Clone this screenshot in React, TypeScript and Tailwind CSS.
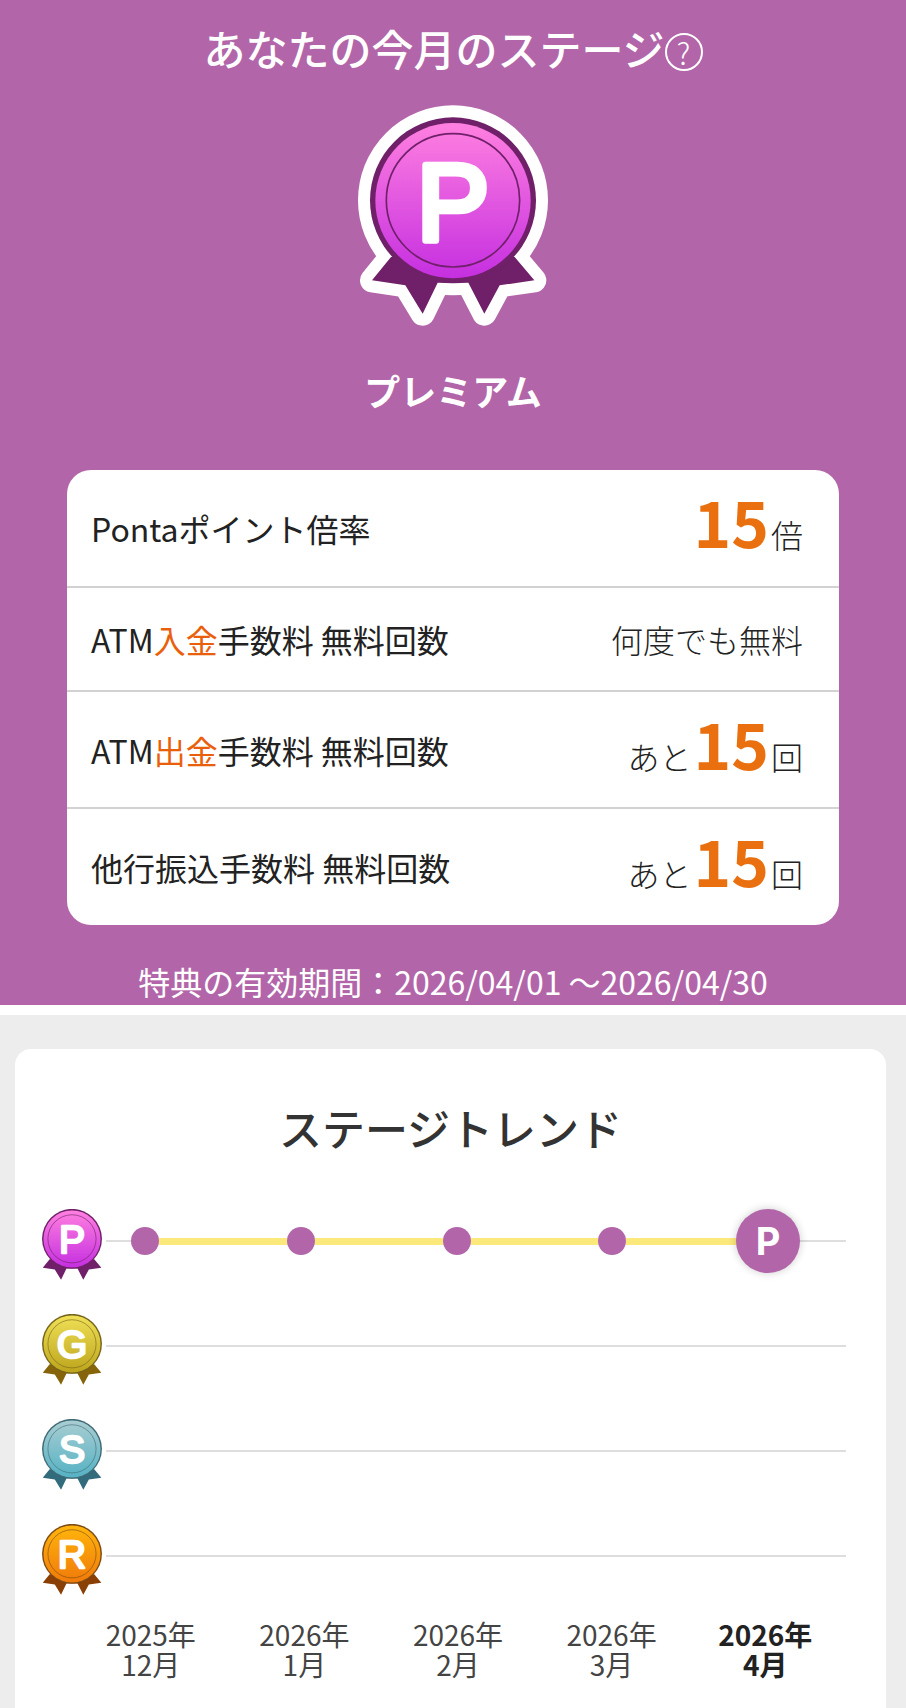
import { clsx } from "clsx";

type StageCode = "P" | "G" | "S" | "R";

const MEDAL_COLORS: Record<StageCode, { top: string; bottom: string; edge: string; ribbon: string }> = {
  P: { top: "#ff80e0", bottom: "#c52fe0", edge: "#6f2068", ribbon: "#6f2068" },
  G: { top: "#efe056", bottom: "#bda51c", edge: "#75631a", ribbon: "#86650a" },
  S: { top: "#a9cdd2", bottom: "#55b2c4", edge: "#3f6a75", ribbon: "#326b7b" },
  R: { top: "#ffb50c", bottom: "#f07a0a", edge: "#7d4a14", ribbon: "#8a3f05" },
};

const RIBBON = "M150 500 93 570 193 585 245 670 290 577 382 577 430 670 476 585 580 570 521 500Z";

const stages: { code: StageCode; name: string }[] = [
  { code: "P", name: "プレミアム" },
  { code: "G", name: "ゴールド" },
  { code: "S", name: "シルバー" },
  { code: "R", name: "レギュラー" },
];

const months = [
  { year: "2025年", month: "12月" },
  { year: "2026年", month: "1月" },
  { year: "2026年", month: "2月" },
  { year: "2026年", month: "3月" },
  { year: "2026年", month: "4月" },
];

const benefits = [
  { label: "Pontaポイント倍率", count: "15", unit: "倍", height: "h-[118px]" },
  { label: "ATM", accent: "入金", rest: "手数料 無料回数", text: "何度でも無料", height: "h-[104px]" },
  { label: "ATM", accent: "出金", rest: "手数料 無料回数", prefix: "あと", count: "15", unit: "回", height: "h-[117px]" },
  { label: "他行振込手数料 無料回数", prefix: "あと", count: "15", unit: "回", height: "h-[116px]" },
];

function Medal({ code, outlined, className }: { code: StageCode; outlined?: boolean; className?: string }) {
  const c = MEDAL_COLORS[code];
  const id = `medal-${code}-${outlined ? "lg" : "sm"}`;

  return (
    <svg
      viewBox={outlined ? "48 44 576 663" : "87 82 498 590"}
      className={clsx("shrink-0", className)}
      aria-hidden="true"
    >
      <defs>
        <linearGradient id={id} x1="0" y1="0" x2="0" y2="1">
          <stop offset="0" stopColor={c.top} />
          <stop offset="1" stopColor={c.bottom} />
        </linearGradient>
      </defs>
      {outlined && (
        <g fill="#fff" stroke="#fff" strokeWidth="72" strokeLinejoin="round">
          <circle cx="336" cy="330" r="249" />
          <path d={RIBBON} />
        </g>
      )}
      <path d={RIBBON} fill={c.ribbon} />
      <circle cx="336" cy="330" r="249" fill={c.edge} />
      <circle cx="336" cy="331" r={outlined ? 233 : 237} fill={`url(#${id})`} />
      <circle cx="336" cy="330" r="200" fill="none" stroke={c.edge} strokeWidth="5" />
      <text
        x="336"
        y="450"
        textAnchor="middle"
        fontSize="326"
        fontWeight="400"
        fill="#fff"
        stroke="#fff"
        strokeWidth="20"
        strokeLinejoin="round"
        className="font-['Liberation_Sans',sans-serif]"
      >
        {code}
      </text>
    </svg>
  );
}

function TrendTrack() {
  return (
    <div className="flex flex-1 items-center">
      <span className="h-0.5 w-[25px] bg-[#dedede]" />
      {months.map((m, i) => {
        const current = i === months.length - 1;
        return (
          <div key={m.month} className={clsx("flex items-center", !current && "flex-1")}>
            {current ? (
              <span className="z-10 -mx-[18px] flex size-16 items-center justify-center rounded-full bg-[#b266a9] font-['Inter',sans-serif] text-[38px] font-bold text-white shadow-[0_0_8px_rgba(0,0,0,0.2)]">
                P
              </span>
            ) : (
              <>
                <span className="size-7 rounded-full bg-[#b266a9]" />
                <span className="h-[7px] flex-1 bg-[#fce97c]" />
              </>
            )}
          </div>
        );
      })}
      <span className="h-0.5 w-16 bg-[#dedede]" />
    </div>
  );
}

export default function App() {
  return (
    <div className="flex min-h-screen flex-col bg-[#ededed] font-['Noto_Sans_CJK_JP',sans-serif]">
      <section className="flex flex-col items-center border-b-[10px] border-white bg-[#b266a9] px-[67px] pt-4 text-white">
        <div className="flex items-center">
          <h1 className="text-[42px] leading-[64px] font-medium">あなたの今月のステージ</h1>
          <button
            type="button"
            aria-label="ステージについて"
            className="mt-2 flex size-[38px] items-center justify-center rounded-full border-2 border-white text-[30px] leading-none font-light"
          >
            ?
          </button>
        </div>

        <Medal code="P" outlined className="mt-[25px] h-[221px] w-[192px]" />
        <p className="mt-9 text-[36px] leading-[56px] font-bold">プレミアム</p>

        <dl className="mt-[52px] w-full overflow-hidden rounded-3xl bg-white text-[32px] text-[#222]">
          {benefits.map((b, i) => (
            <div
              key={i}
              className={clsx(
                "flex items-center justify-between border-[#d2d2d2] pr-9 pl-6",
                b.height,
                i < benefits.length - 1 && "border-b-2",
              )}
            >
              <dt>
                {b.label}
                {b.accent && <span className="text-[#ea5f0c]">{b.accent}</span>}
                {b.rest}
              </dt>
              <dd className={clsx("flex items-baseline leading-none font-light", b.count && "pb-4")}>
                {b.text}
                {b.prefix}
                {b.count && <span className="mx-0.5 text-[64px] font-bold text-[#ea700f]">{b.count}</span>}
                {b.unit}
              </dd>
            </div>
          ))}
        </dl>

        <p className="mt-8 text-[32px] leading-[48px]">特典の有効期間：2026/04/01 ～2026/04/30</p>
      </section>

      <section className="mt-[34px] mr-5 ml-[15px] flex-1 rounded-t-2xl bg-white pt-12 pb-6">
        <h2 className="text-center text-[43px] leading-[60px] font-medium text-[#333]">ステージトレンド</h2>

        <div className="pr-10 pl-[27px]">
          <ul className="mt-[52px] flex flex-col gap-[35px]">
            {stages.map((s) => (
              <li key={s.code} aria-label={s.name} className="flex h-[70px] items-start gap-1">
                <Medal code={s.code} className="h-[71px] w-[60px]" />
                <div className="flex h-16 flex-1 items-center">
                  {s.code === "P" ? <TrendTrack /> : <span className="h-0.5 flex-1 bg-[#dedede]" />}
                </div>
              </li>
            ))}
          </ul>

          <div className="mt-[25px] mr-1 ml-8 grid grid-cols-5 text-center text-[28px] leading-[30px] text-[#444]">
            {months.map((m, i) => (
              <p key={m.month} className={clsx(i === months.length - 1 && "font-bold text-[#222]")}>
                {m.year}
                <br />
                {m.month}
              </p>
            ))}
          </div>
        </div>
      </section>
    </div>
  );
}
